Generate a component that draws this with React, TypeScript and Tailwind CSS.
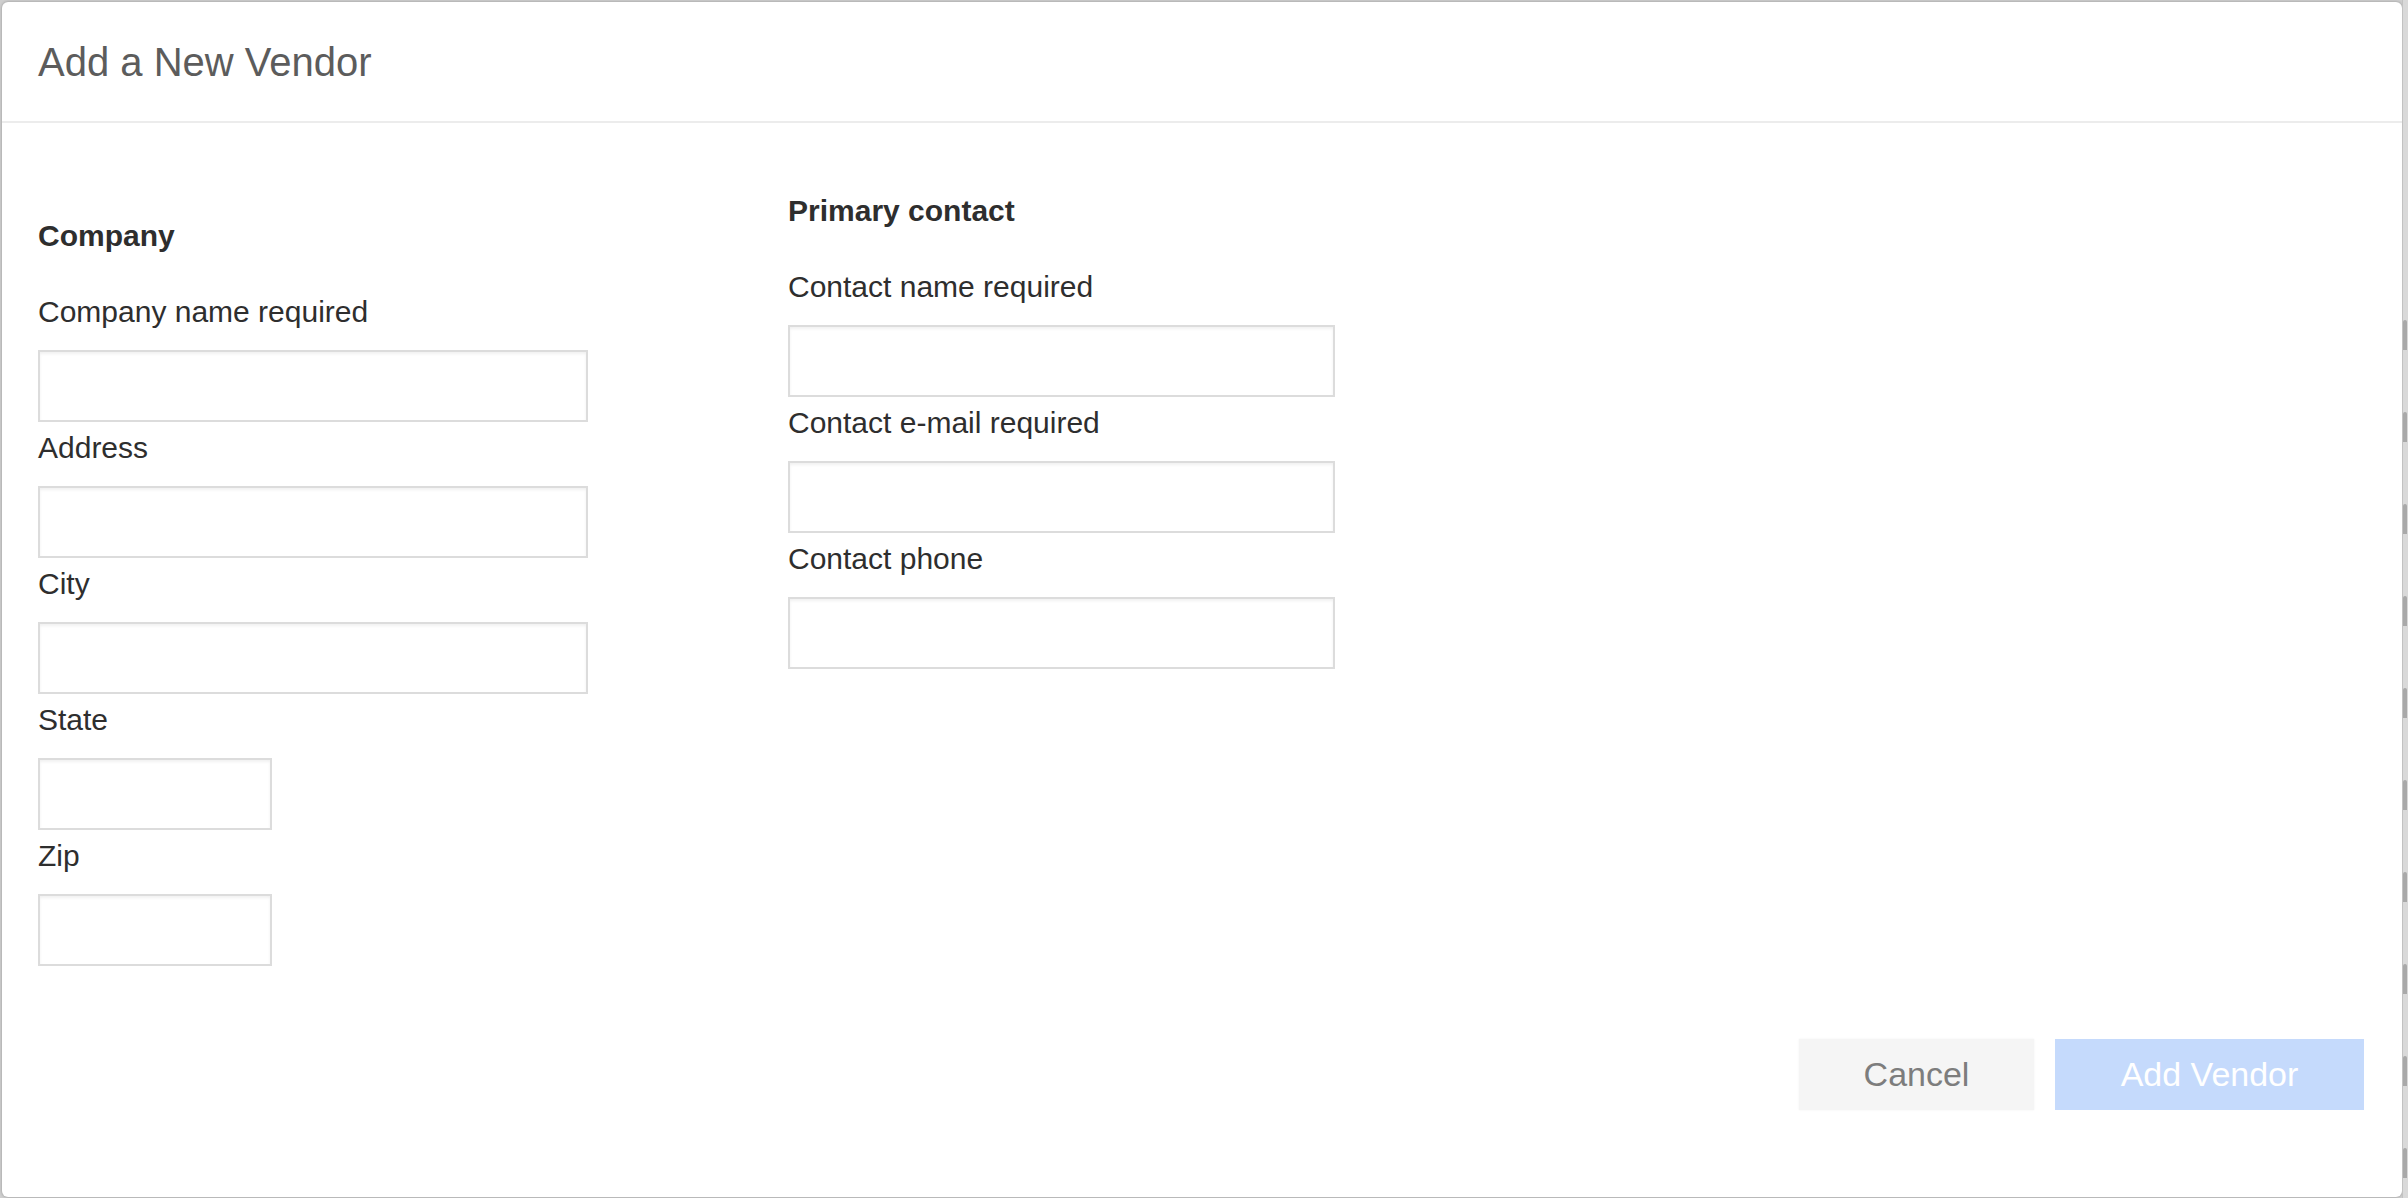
import React from "react";

const font = { fontFamily: '"Liberation Sans", Arial, Helvetica, sans-serif' };

function Field({ label, small, narrow }: { label: string; small?: boolean; narrow?: boolean }) {
  const w = small ? "w-[234px]" : narrow ? "w-[547px]" : "w-[550px]";
  return (
    <div className="flex flex-col">
      <div className="h-[52px] leading-[52px] text-[30px] text-[#2e2e2e] mb-[12px] whitespace-nowrap">{label}</div>
      <input
        className={`h-[72px] ${w} border-2 border-[#dcdcdc] bg-white shadow-[inset_0_2px_3px_rgba(0,0,0,0.06)] outline-none`}
      />
    </div>
  );
}

function Heading({ children }: { children: React.ReactNode }) {
  return <div className="h-[52px] leading-[52px] text-[30px] font-bold text-[#2e2e2e] mb-[24px]">{children}</div>;
}

export default function App() {
  const blobs = Array.from({ length: 10 });
  return (
    <div className="w-[2408px] h-[1198px] bg-[#cfcfcf] flex overflow-hidden" style={font}>
      <div className="w-[2400px] h-[1195px] mt-[2px] ml-[2px] bg-white rounded-[6px] flex flex-col shadow-[0_0_3px_rgba(0,0,0,0.3)]">
        <div className="h-[121px] border-b-2 border-[#ececec] flex items-center px-[36px]">
          <div className="text-[40px] text-[#5c5c5c] leading-none">Add a New Vendor</div>
        </div>
        <div className="flex pl-[36px]">
          <div className="w-[750px] pt-[87px] flex flex-col">
            <Heading>Company</Heading>
            <Field label="Company name required" />
            <Field label="Address" />
            <Field label="City" />
            <Field label="State" small />
            <Field label="Zip" small />
          </div>
          <div className="pt-[62px] flex flex-col">
            <Heading>Primary contact</Heading>
            <Field label="Contact name required" narrow />
            <Field label="Contact e-mail required" narrow />
            <Field label="Contact phone" narrow />
          </div>
        </div>
        <div className="flex justify-end gap-[21px] pr-[38px] mt-[73px]">
          <button className="w-[235px] h-[71px] bg-[#f5f5f5] text-[#7d7d7d] text-[34px] shadow-[0_0_2px_rgba(0,0,0,0.06)]">Cancel</button>
          <button className="w-[309px] h-[71px] bg-[#c5dafc] text-white text-[34px]">Add Vendor</button>
        </div>
      </div>
      <div className="flex-1 bg-[#d9d9d9] flex flex-col gap-[62px] pt-[320px] border-l border-[#c2c2c2]">
        {blobs.map((_, i) => (
          <div key={i} className="h-[30px] w-[4px] bg-[#a9a9a9] rounded-t-[4px]" />
        ))}
      </div>
    </div>
  );
}
